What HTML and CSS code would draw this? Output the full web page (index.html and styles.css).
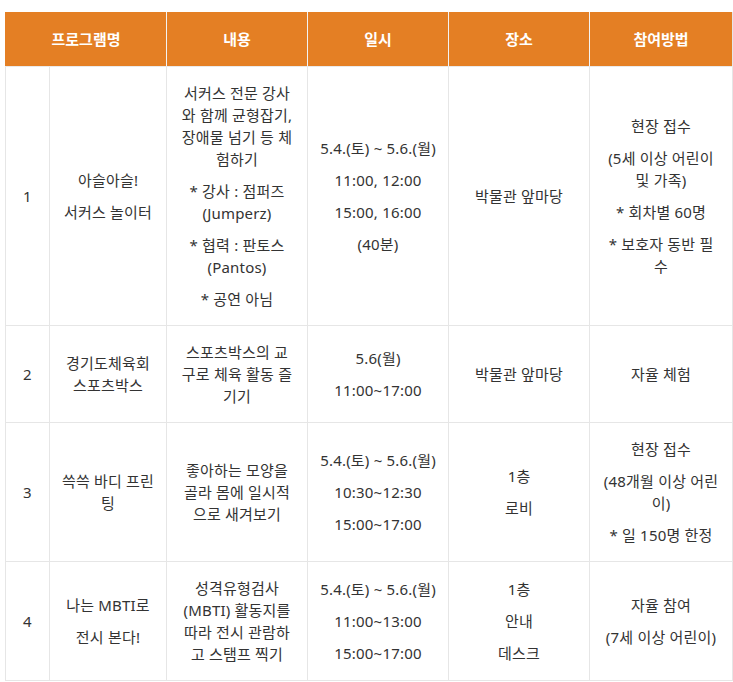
FILE: index.html
```html
<!DOCTYPE html>
<html lang="ko">
<head>
<meta charset="utf-8">
<link rel="stylesheet" href="styles.css">
</head>
<body>
<div class="page">
<table class="schedule">
  <colgroup>
    <col class="c-no">
    <col class="c-name">
    <col class="c-mid">
    <col class="c-mid">
    <col class="c-mid">
    <col class="c-last">
  </colgroup>
  <thead>
    <tr>
      <th colspan="2">프로그램명</th>
      <th>내용</th>
      <th>일시</th>
      <th>장소</th>
      <th>참여방법</th>
    </tr>
  </thead>
  <tbody>
    <tr>
      <td>1</td>
      <td><p>아슬아슬!</p><p>서커스 놀이터</p></td>
      <td><p>서커스 전문 강사<br>와 함께 균형잡기,<br>장애물 넘기 등 체<br>험하기</p><p>* 강사 : 점퍼즈<br>(Jumperz)</p><p>* 협력 : 판토스<br>(Pantos)</p><p>* 공연 아님</p></td>
      <td><p>5.4.(토) ~ 5.6.(월)</p><p>11:00, 12:00</p><p>15:00, 16:00</p><p>(40분)</p></td>
      <td><p>박물관 앞마당</p></td>
      <td><p>현장 접수</p><p>(5세 이상 어린이<br>및 가족)</p><p>* 회차별 60명</p><p>* 보호자 동반 필<br>수</p></td>
    </tr>
    <tr>
      <td>2</td>
      <td><p>경기도체육회<br>스포츠박스</p></td>
      <td><p>스포츠박스의 교<br>구로 체육 활동 즐<br>기기</p></td>
      <td><p>5.6(월)</p><p>11:00~17:00</p></td>
      <td><p>박물관 앞마당</p></td>
      <td><p>자율 체험</p></td>
    </tr>
    <tr>
      <td>3</td>
      <td><p>쓱쓱 바디 프린<br>팅</p></td>
      <td><p>좋아하는 모양을<br>골라 몸에 일시적<br>으로 새겨보기</p></td>
      <td><p>5.4.(토) ~ 5.6.(월)</p><p>10:30~12:30</p><p>15:00~17:00</p></td>
      <td><p>1층</p><p>로비</p></td>
      <td><p>현장 접수</p><p>(48개월 이상 어린<br>이)</p><p>* 일 150명 한정</p></td>
    </tr>
    <tr>
      <td>4</td>
      <td><p>나는 MBTI로</p><p>전시 본다!</p></td>
      <td><p>성격유형검사<br>(MBTI) 활동지를<br>따라 전시 관람하<br>고 스탬프 찍기</p></td>
      <td><p>5.4.(토) ~ 5.6.(월)</p><p>11:00~13:00</p><p>15:00~17:00</p></td>
      <td><p>1층</p><p>안내</p><p>데스크</p></td>
      <td><p>자율 참여</p><p>(7세 이상 어린이)</p></td>
    </tr>
  </tbody>
</table>
</div>
</body>
</html>
```
FILE: styles.css
```css
html, body {
  margin: 0;
  padding: 0;
  background: #fff;
}
.page {
  padding: 12px 0 0 5px;
  font-family: "Noto Sans CJK KR", "Noto Sans", sans-serif;
}
.schedule {
  width: 727px;
  table-layout: fixed;
  border-collapse: collapse;
  color: #333;
  font-size: 15px;
  line-height: 22px;
}
.c-no { width: 44px; }
.c-name { width: 117px; }
.c-mid { width: 141px; }
.c-last { width: 143px; }
.schedule th {
  height: 54px;
  padding: 0;
  background: #e47f24;
  color: #fff;
  font-weight: 700;
  font-size: 15px;
  text-align: center;
  vertical-align: middle;
  border-left: 1px solid #f3f3f3;
  border-bottom: 1px solid #eaeaea;
}
.schedule th:first-child {
  border-left: 1px solid #e47f24;
}
.schedule th:last-child {
  border-right: 1px solid #e6e6e6;
}
.schedule td {
  padding: 15px 4px;
  border: 1px solid #e6e6e6;
  text-align: center;
  vertical-align: middle;
  white-space: nowrap;
  font-family: "Noto Sans", "Noto Sans CJK KR", sans-serif;
  letter-spacing: 0.2px;
}
.schedule p {
  margin: 0;
}
.schedule p + p {
  margin-top: 10px;
}
```
